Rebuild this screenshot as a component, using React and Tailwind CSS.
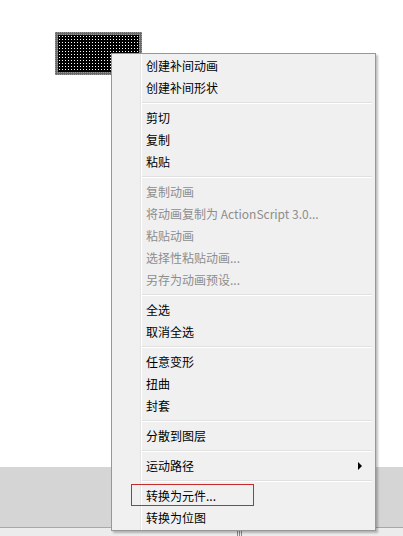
const items = [
  { label: '创建补间动画' },
  { label: '创建补间形状' },
  'sep',
  { label: '剪切' },
  { label: '复制' },
  { label: '粘贴' },
  'sep',
  { label: '复制动画', disabled: true },
  { label: '将动画复制为 ActionScript 3.0...', disabled: true },
  { label: '粘贴动画', disabled: true },
  { label: '选择性粘贴动画...', disabled: true },
  { label: '另存为动画预设...', disabled: true },
  'sep',
  { label: '全选' },
  { label: '取消全选' },
  'sep',
  { label: '任意变形' },
  { label: '扭曲' },
  { label: '封套' },
  'sep',
  { label: '分散到图层' },
  'sep',
  { label: '运动路径', submenu: true },
  'sep',
  { label: '转换为元件...', marked: true },
  { label: '转换为位图' },
];

const DottedShape = () => (
  <svg width="87" height="43" viewBox="0 0 87 43">
    <defs>
      <pattern id="dots" width="3" height="3" patternUnits="userSpaceOnUse">
        <rect width="3" height="3" fill="#000" />
        <rect x="1" y="1" width="1" height="1" fill="#fff" />
      </pattern>
      <pattern id="edge" width="2" height="2" patternUnits="userSpaceOnUse">
        <rect width="2" height="2" fill="#6a6a6a" />
        <rect width="1" height="1" fill="#9a9a9a" />
      </pattern>
    </defs>
    <rect width="87" height="43" fill="url(#edge)" />
    <rect x="3" y="3" width="81" height="37" fill="url(#dots)" />
  </svg>
);

const MenuRow = ({ item }) => {
  if (item === 'sep') {
    return (
      <div className="h-[8px] flex flex-col justify-center ml-[30px] mr-[3px]">
        <div className="h-px bg-[#e0e0e0]" />
        <div className="h-px bg-white" />
      </div>
    );
  }
  return (
    <div className={`relative h-[22px] flex items-center pl-[34px] pr-3 ${item.disabled ? 'text-[#8d8d8d]' : 'text-black'}`}>
      <span className="leading-none">{item.label}</span>
      {item.submenu && (
        <svg className="absolute right-[13px] top-[7px]" width="4" height="8" viewBox="0 0 4 8">
          <path d="M0 0 L4 4 L0 8 Z" fill="#000" />
        </svg>
      )}
      {item.marked && (
        <div className="absolute left-[19px] top-[-1px] w-[123px] h-[22px] border border-[#c62a2a]" />
      )}
    </div>
  );
};

const App = () => {
  return (
    <div
      className="relative w-[403px] h-[536px] overflow-hidden bg-white flex flex-col text-[12px]"
      style={{ fontFamily: '"Noto Sans CJK SC", "Microsoft YaHei", sans-serif' }}
    >
      <div className="flex-1 bg-white" />
      <div className="h-[61px] bg-[#d5d5d5] border-b border-[#a8a8a8]" />
      <div className="h-[8px] bg-[#ececec] flex justify-center">
        <div className="ml-[76px] mt-[2px] flex gap-[1px]">
          <div className="w-px h-[6px] bg-[#888]" />
          <div className="w-px h-[6px] bg-[#888]" />
          <div className="w-px h-[6px] bg-[#888]" />
        </div>
      </div>

      <div className="absolute left-[55px] top-[32px]">
        <DottedShape />
      </div>

      <div className="absolute left-[111px] top-[53px] w-[265px] border border-[#979797] bg-[#f0f0f0] py-px shadow-[2px_2px_2px_rgba(0,0,0,0.25)]">
        <div className="absolute left-[28px] top-0 bottom-0 w-px bg-[#e2e3e3]" />
        <div className="absolute left-[29px] top-0 bottom-0 w-px bg-white" />
        {items.map((item, i) => (
          <MenuRow key={i} item={item} />
        ))}
      </div>
    </div>
  );
};

export default App;
